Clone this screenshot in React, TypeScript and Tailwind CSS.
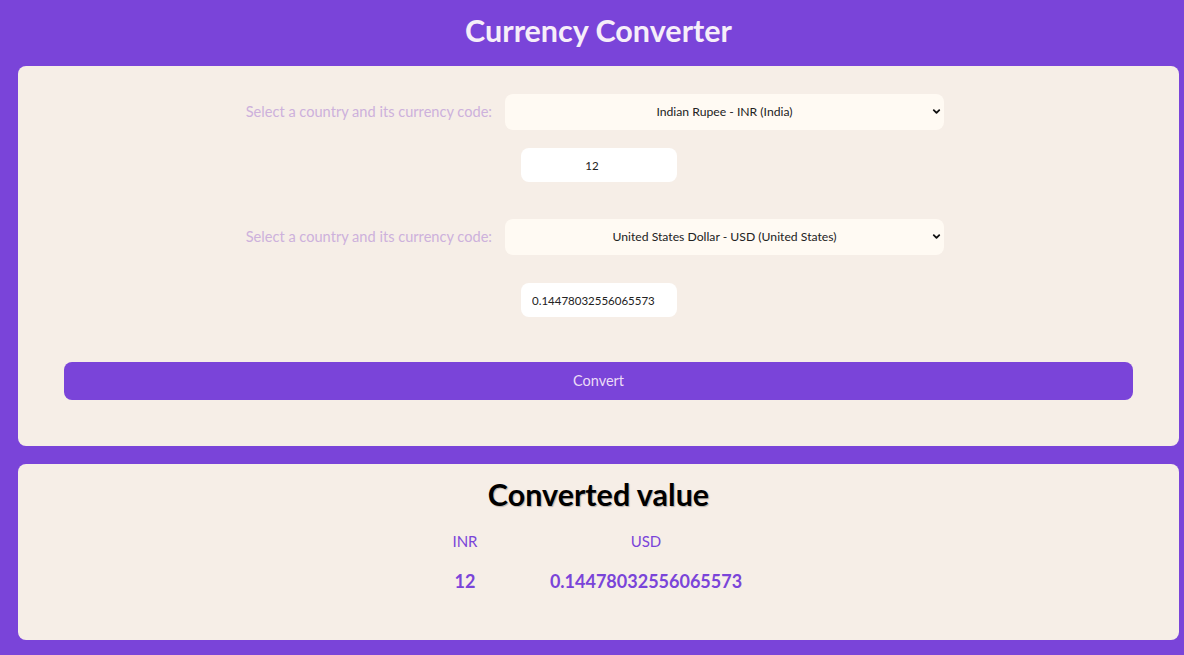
import { ChevronDown } from 'lucide-react';

const FONT = { fontFamily: 'Lato, "Open Sans", sans-serif' };

function CurrencySelect({ value }: { value: string }) {
  return (
    <div className="relative w-[439px]">
      <select
        defaultValue={value}
        className="h-[36px] w-full appearance-none rounded-lg bg-[#fffaf3] px-8 text-center text-[12.2px] text-[#222] outline-none"
      >
        <option>{value}</option>
      </select>
      <ChevronDown
        size={11}
        strokeWidth={4}
        className="pointer-events-none absolute right-[2px] top-[12px] text-[#111]"
      />
    </div>
  );
}

function Row({ value }: { value: string }) {
  return (
    <div className="flex items-center">
      <label className="w-[487px] pr-[13px] text-right text-[14.6px] text-[#cdb1dc]">
        Select a country and its currency code:
      </label>
      <CurrencySelect value={value} />
    </div>
  );
}

export default function App() {
  return (
    <div className="min-h-[655px] bg-[#7a44d9] pb-[17px]" style={FONT}>
      <h1 className="ml-[18px] mr-[5px] pt-[10px] pb-[16px] text-center text-[30.5px] font-bold leading-[40px] text-[#f6eef9]">
        Currency Converter
      </h1>

      <div className="ml-[18px] mr-[5px] rounded-lg bg-[#f6eee7] pt-[28px] pb-[46px]">
        <Row value="Indian Rupee - INR (India)" />
        <div className="mt-[18px] flex">
          <input
            defaultValue="12"
            className="ml-[503px] h-[34px] w-[156px] rounded-lg bg-white pr-[14px] text-center text-[11.5px] text-[#222] outline-none"
          />
        </div>

        <div className="mt-[37px]">
          <Row value="United States Dollar - USD (United States)" />
        </div>
        <div className="mt-[28px] flex">
          <input
            defaultValue="0.14478032556065573"
            className="ml-[503px] h-[34px] w-[156px] rounded-lg bg-white px-[11px] text-[11.5px] text-[#222] outline-none"
          />
        </div>

        <div className="mt-[45px] px-[46px]">
          <button className="h-[38px] w-full rounded-lg bg-[#7a44d9] text-[14.5px] text-[#ecdcf7]">
            Convert
          </button>
        </div>
      </div>

      <div className="mt-[18px] ml-[18px] mr-[5px] rounded-lg bg-[#f6eee7] pt-[10px] pb-[45px]">
        <h2
          className="text-center text-[30.5px] font-bold leading-[40px] text-black"
          style={{ textShadow: '1px 1px 1px rgba(0,0,0,0.25)' }}
        >
          Converted value
        </h2>
        <table className="mt-[16px] ml-[412px] text-[#7a44d9]">
          <thead>
            <tr className="text-[15px]">
              <th className="w-[70px] font-normal">INR</th>
              <th className="w-[292px] font-normal">USD</th>
            </tr>
          </thead>
          <tbody>
            <tr className="text-[18px] font-bold">
              <td className="pt-[15px] text-center">12</td>
              <td className="pt-[15px] text-center">0.14478032556065573</td>
            </tr>
          </tbody>
        </table>
      </div>
    </div>
  );
}
